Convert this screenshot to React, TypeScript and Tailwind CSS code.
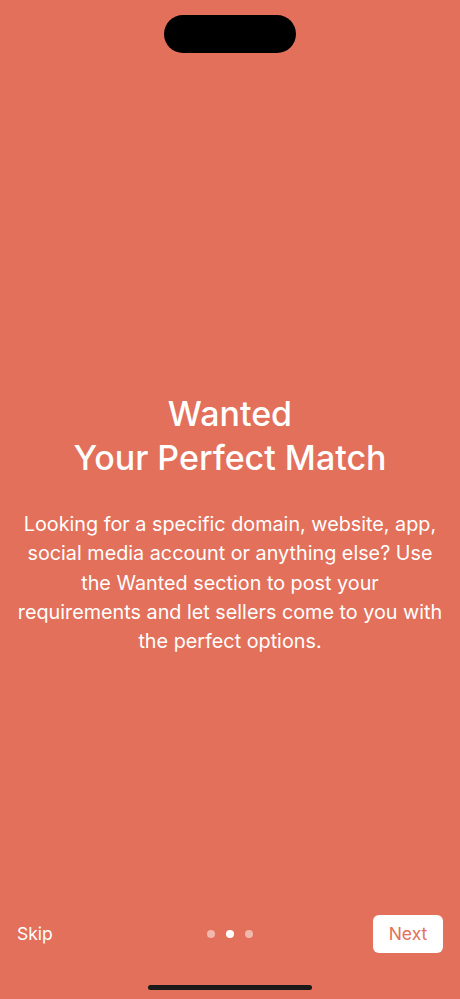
import React from "react";

export default function App() {
  return (
    <div
      className="relative flex h-[999px] w-[460px] flex-col overflow-hidden bg-[#E3705A] text-white"
      style={{ fontFamily: 'Inter, "Liberation Sans", Arial, sans-serif' }}
    >
      <div className="flex justify-center pt-[15px]">
        <div className="h-[38px] w-[132px] rounded-full bg-black" />
      </div>
      <div className="flex flex-1 flex-col items-center px-[10px] pt-[339px] text-center">
        <h1 className="text-[34px] leading-[44px] font-medium">
          Wanted
          <br />
          Your Perfect Match
        </h1>
        <p className="mt-[30px] text-[19.8px] leading-[29.3px]">
          Looking for a specific domain, website, app,
          <br />
          social media account or anything else? Use
          <br />
          the Wanted section to post your
          <br />
          requirements and let sellers come to you with
          <br />
          the perfect options.
        </p>
      </div>
      <div className="flex items-center justify-between pl-[17px] pr-[17px] pb-[46px]">
        <button className="w-[70px] text-left text-[17.5px]">Skip</button>
        <div className="flex items-center gap-[11px]">
          <span className="h-[8px] w-[8px] rounded-full bg-white/50" />
          <span className="h-[8px] w-[8px] rounded-full bg-white" />
          <span className="h-[8px] w-[8px] rounded-full bg-white/50" />
        </div>
        <button className="flex h-[38px] w-[70px] items-center justify-center rounded-[6px] bg-white text-[17.5px] text-[#E3705A]">
          Next
        </button>
      </div>
      <div className="absolute bottom-[9px] left-1/2 h-[5px] w-[164px] -translate-x-1/2 rounded-full bg-[#1a1a1a]" />
    </div>
  );
}
